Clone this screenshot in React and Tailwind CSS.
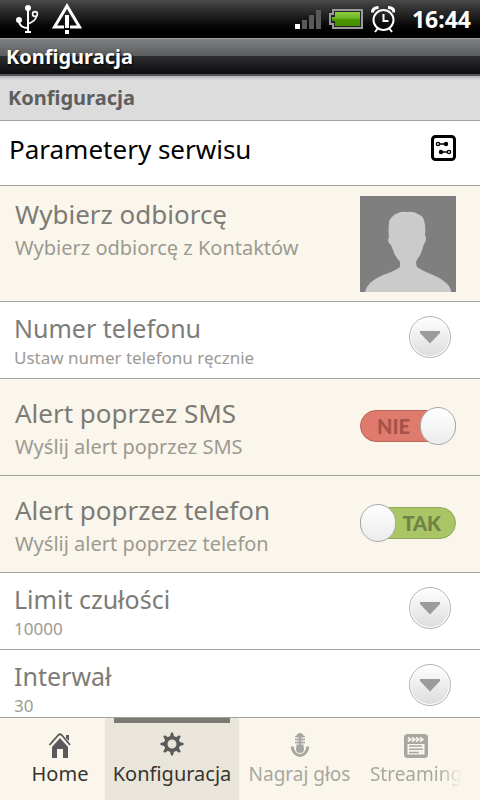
import React, { useState } from 'react';
import clsx from 'clsx';

function UsbIcon() {
  return (
    <svg className="w-6 h-7" viewBox="0 0 24 28" fill="none" stroke="#fff" strokeWidth="2">
      <path d="M12 3v24" />
      <circle cx="12" cy="3" r="3" fill="#fff" stroke="none" />
      <circle cx="3" cy="15" r="3" fill="#fff" stroke="none" />
      <path d="M3 17c1 4 5 6 9 6" />
      <circle cx="19" cy="9" r="2.4" strokeWidth="1.6" />
      <path d="M20.5 11c0 4-4 6-8.5 8" strokeWidth="1.6" />
      <path d="M9 27h6" />
    </svg>
  );
}

function WarningIcon() {
  return (
    <svg className="w-8 h-8" viewBox="0 0 32 32" fill="none">
      <path d="M13 24H3.500L16 3l12.500 21H19" stroke="#fff" strokeWidth="3" />
      <path d="M14 12h4v13h-4zM14 27h4v4h-4z" fill="#fff" />
    </svg>
  );
}

function SignalIcon() {
  return (
    <svg className="w-[26px] h-5" viewBox="0 0 26 20">
      <path d="M0 15h5v5H0z" fill="#fff" />
      <path d="M7 11h5v9H7zM14 6h5v14h-5zM21 1h5v19h-5z" fill="#5a5a5a" />
    </svg>
  );
}

function BatteryIcon() {
  return (
    <svg className="w-9 h-5" viewBox="0 0 36 20">
      <defs>
        <linearGradient id="charge" x1="0" y1="0" x2="0" y2="1">
          <stop offset="0" stopColor="#8fce3f" />
          <stop offset="0.45" stopColor="#6fb52a" />
          <stop offset="0.5" stopColor="#4d9a00" />
          <stop offset="1" stopColor="#458c00" />
        </linearGradient>
      </defs>
      <path d="M5 1h29v18H5v-4H2V5h3z" fill="#222" stroke="#9b9b9b" strokeWidth="2" />
      <path d="M7 3h25v14H7v-5H4V8h3z" fill="url(#charge)" />
    </svg>
  );
}

function AlarmIcon() {
  return (
    <svg className="w-6 h-7" viewBox="0 0 24 28" fill="none" stroke="#fff" strokeWidth="2">
      <circle cx="12.500" cy="15" r="10" />
      <path d="M12.500 9v7h5M7 23l-3 4M18 23l3 4" />
      <path d="M1.500 7.500c0-3 2-5 6-5M23 7.500c0-3-2-5-6-5" strokeWidth="3" />
    </svg>
  );
}

function ParamsIcon() {
  return (
    <svg className="w-[25px] h-[26px]" viewBox="0 0 25 26" fill="none" stroke="#000">
      <rect x="1.500" y="1.500" width="22" height="23" rx="3" strokeWidth="3" />
      <path d="M8 9h7M10 17h7" strokeWidth="1.600" />
      <circle cx="7" cy="9" r="1.600" strokeWidth="1.400" />
      <circle cx="15" cy="9" r="2.200" fill="#000" stroke="none" />
      <circle cx="10" cy="17" r="2.200" fill="#000" stroke="none" />
      <circle cx="18" cy="17" r="1.600" strokeWidth="1.400" />
    </svg>
  );
}

function Avatar() {
  return (
    <svg className="w-24 h-24" viewBox="0 0 96 96">
      <path d="M0 0h96v96H0z" fill="#7f7f7f" />
      <path
        d="M5 96q1-5 5-9 6-5 13-8 12-4 17-8v-5l-3-4q-3-4-4-8l-2-5q-3-2-3-5l1-3q-1-7 0-13 0-4 2-6 3-4 7-5 4-2 9-1 6-1 11 2 5 2 6 6 2 7 1 15l1 3q0 4-2 6l-2 6q-1 5-4 8l-2 4q0 3 1 5 6 4 16 8 6 2 12 7 6 5 6 10z"
        fill="#cbcbcb"
      />
    </svg>
  );
}

function HomeIcon() {
  return (
    <svg className="w-6 h-7" viewBox="0 0 24 28">
      <path d="M1.500 14L10 4.300q2-2 4 0L22 14" fill="none" stroke="#5a5a5a" strokeWidth="1.800" />
      <path d="M12 7l8 9V27h-5v-9H9v9H4V16z" fill="#5a5a5a" />
      <path d="M18 4h3v6l-3-3z" fill="#5a5a5a" />
    </svg>
  );
}

function GearIcon() {
  return (
    <svg className="w-6 h-7" viewBox="0 0 24 28">
      <g fill="#5a5a5a">
        {[0, 45, 90, 135, 180, 225, 270, 315].map((angle) => (
          <path key={angle} d="M9.500 7l1.600-5.500h1.800L14.500 7z" transform={`rotate(${angle} 12 13)`} />
        ))}
      </g>
      <circle cx="12" cy="13" r="6.300" fill="none" stroke="#5a5a5a" strokeWidth="3.600" />
    </svg>
  );
}

function MicIcon() {
  return (
    <svg className="w-6 h-7" viewBox="0 0 24 28">
      <rect x="8.500" y="2" width="7" height="18" rx="3.500" fill="#a6a6a3" />
      <circle cx="12" cy="18" r="4" fill="#a6a6a3" />
      <path d="M7 5.500h4M7 8.500h4M7 11.500h4M13 5.500h4M13 8.500h4M13 11.500h4" stroke="#a6a6a3" strokeWidth="1.500" />
      <path d="M8 7h3M8 10h3M8 13h3M13 7h3M13 10h3M13 13h3" stroke="#faf6eb" strokeWidth="1" />
      <path d="M4.300 15.500c0 5 3.500 9 7.700 9s7.700-4 7.700-9" fill="none" stroke="#a6a6a3" strokeWidth="3" />
    </svg>
  );
}

function ClipIcon() {
  return (
    <svg className="w-6 h-7" viewBox="0 0 24 28">
      <rect x="0" y="3" width="24" height="24" rx="3.500" fill="#a6a6a3" />
      <path d="M3.500 13h17v10.500h-17z" fill="#faf6eb" />
      <path d="M5 15h13M5 18.300h14M5 21.500h10" stroke="#a6a6a3" strokeWidth="1.500" />
      <path
        d="M4 6.500l2.500 2L4 10.500M8 6.500l2.500 2-2.500 2M12 6.500l2.500 2-2.500 2M16 6.500l2.500 2-2.500 2"
        fill="none"
        stroke="#faf6eb"
        strokeWidth="1.900"
      />
    </svg>
  );
}

function RowText({ title, summary, small, id }) {
  return (
    <div className="min-w-0 flex-1">
      <h3
        id={id}
        className={clsx('text-[#7d7b76]', small ? 'text-[25px] leading-7' : 'text-[26px] leading-9')}
      >
        {title}
      </h3>
      <p className={clsx('text-[#9c9a93]', small ? 'pt-1 text-[17px] leading-6' : 'text-[20px] leading-8')}>
        {summary}
      </p>
    </div>
  );
}

function DropRow({ id, title, summary }) {
  return (
    <li className="flex items-start border-b border-[#a3a19b] bg-white pt-3 pb-2 pl-[14px] pr-[29px]">
      <RowText id={id} title={title} summary={summary} small />
      <button
        type="button"
        aria-labelledby={id}
        className="mt-[2px] flex h-[42px] w-[42px] shrink-0 items-center justify-center rounded-full border border-[#b5b5b5] bg-linear-to-b from-white to-[#dcdcdc] ring-1 ring-inset ring-white"
      >
        <svg className="w-[22px] h-[14px]" viewBox="0 0 22 14">
          <path d="M1 1h20v2L11 13.500 1 3z" fill="#9b9b9b" />
        </svg>
      </button>
    </li>
  );
}

function Toggle({ checked, onChange, labelledBy }) {
  return (
    <label className="relative flex h-10 w-24 shrink-0 items-center">
      <input
        type="checkbox"
        aria-labelledby={labelledBy}
        checked={checked}
        onChange={onChange}
        className="sr-only"
      />
      <span
        className={clsx(
          'flex h-8 w-full items-center rounded-full border font-[Lato] text-[20px] font-black',
          checked
            ? 'justify-end border-[#93a95f] bg-[#a9c566] pr-[14px] text-[#6f8345]'
            : 'border-[#b9655a] bg-[#df7b6c] pl-4 text-[#a4534a]'
        )}
      >
        {checked ? 'TAK' : 'NIE'}
      </span>
      <span
        className={clsx(
          'absolute top-px h-[38px] w-[36px] rounded-full border border-[#a9a9a9] bg-linear-to-b from-white to-[#ececee]',
          checked ? 'left-0' : 'right-0'
        )}
      />
    </label>
  );
}

function ToggleRow({ id, title, summary, initial }) {
  const [checked, setChecked] = useState(initial);

  return (
    <li className="flex items-start border-b border-[#a3a19b] bg-[#faf6eb] pt-4 pb-3 pl-[15px] pr-6">
      <RowText id={id} title={title} summary={summary} />
      <div className="pt-[11px]">
        <Toggle checked={checked} onChange={() => setChecked(!checked)} labelledBy={id} />
      </div>
    </li>
  );
}

function Tab({ icon, label, active, muted, fade, className }) {
  return (
    <button
      type="button"
      className={clsx(
        'flex shrink-0 flex-col items-center px-2 leading-7',
        active && 'bg-[#e9e5da]',
        muted ? 'text-[19px] text-[#a9a7a0]' : 'text-[20px] text-[#36342f]',
        className
      )}
    >
      <span className={clsx('mb-2 h-[5px] w-[116px] max-w-full', active && 'bg-[#7a7974]')} />
      {icon}
      <span
        className={clsx(
          'mt-px whitespace-nowrap leading-7',
          fade && 'mask-[linear-gradient(to_right,#000_75%,transparent)]'
        )}
      >
        {label}
      </span>
    </button>
  );
}

export default function App() {
  return (
    <div className="flex h-screen flex-col overflow-hidden bg-white font-['Noto_Sans',sans-serif]">
      <div className="flex h-[38px] shrink-0 items-center bg-linear-to-b from-[#4a4a4a] to-black pl-4 pr-[9px] text-white">
        <div className="flex items-center gap-[11px]">
          <UsbIcon />
          <WarningIcon />
        </div>
        <div className="ml-auto flex items-center gap-[7px]">
          <SignalIcon />
          <BatteryIcon />
          <AlarmIcon />
          <span className="pl-[10px] text-[23px] leading-8 font-bold">16:44</span>
        </div>
      </div>

      <div className="flex h-[38px] shrink-0 items-center border-t border-b-2 border-t-[#a0a0a0] border-b-[#55555c] bg-[linear-gradient(#7d7f81,#5a5c5e_49%,#2c2d2f_50%,#0c0c0e)] px-[6px]">
        <h1 className="text-[20px] leading-7 font-bold text-white text-shadow-[1px_1px_2px_#000]">Konfiguracja</h1>
      </div>

      <div className="flex h-[45px] shrink-0 items-center border-b border-[#a3a3a3] bg-[linear-gradient(#b5b5b5,#dcdcdc_4px)] px-2">
        <h2 className="text-[20px] leading-7 font-bold text-[#5e5e5e]">Konfiguracja</h2>
      </div>

      <ul className="min-h-0 flex-1 overflow-hidden">
        <li className="flex items-start justify-between border-b border-[#a3a19b] bg-white pt-[10px] pb-[18px] pl-[9px] pr-6">
          <h3 className="text-[26px] leading-9 text-black">Parametery serwisu</h3>
          <span className="pt-1">
            <ParamsIcon />
          </span>
        </li>
        <li className="flex items-start border-b border-[#a3a19b] bg-[#faf6eb] pt-[10px] pb-[9px] pl-[15px] pr-6">
          <RowText id="recipient" title="Wybierz odbiorcę" summary="Wybierz odbiorcę z Kontaktów" />
          <button type="button" aria-labelledby="recipient" className="shrink-0">
            <Avatar />
          </button>
        </li>
        <DropRow id="phone" title="Numer telefonu" summary="Ustaw numer telefonu ręcznie" />
        <ToggleRow id="sms" title="Alert poprzez SMS" summary="Wyślij alert poprzez SMS" initial={false} />
        <ToggleRow id="call" title="Alert poprzez telefon" summary="Wyślij alert poprzez telefon" initial />
        <DropRow id="limit" title="Limit czułości" summary="10000" />
        <DropRow id="interval" title="Interwał" summary="30" />
      </ul>

      <nav className="flex h-[83px] shrink-0 border-t border-[#a3a19b] bg-[#faf6eb] pl-[15px]">
        <Tab icon={<HomeIcon />} label="Home" className="w-[90px]" />
        <Tab icon={<GearIcon />} label="Konfiguracja" active className="w-[134px]" />
        <Tab icon={<MicIcon />} label="Nagraj głos" muted className="w-[121px]" />
        <Tab icon={<ClipIcon />} label="Streaming" muted fade className="w-[112px]" />
      </nav>
    </div>
  );
}
